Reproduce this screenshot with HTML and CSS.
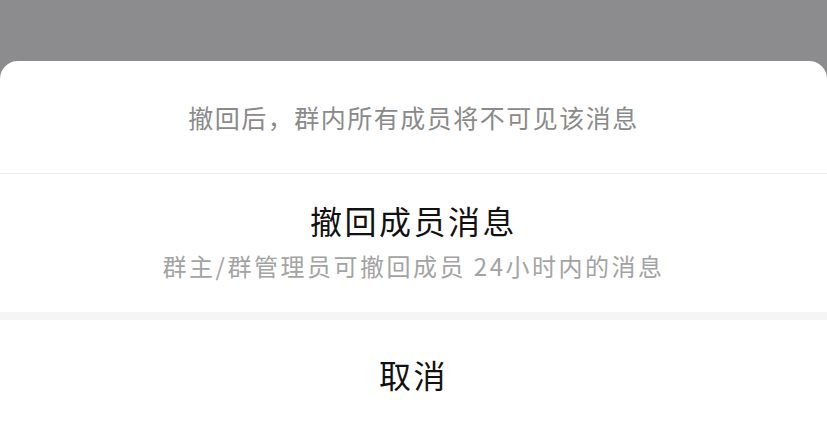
FILE: index.html
```html
<!DOCTYPE html>
<html lang="zh-CN">
<head>
  <meta charset="UTF-8">
  <meta name="viewport" content="width=device-width, initial-scale=1.0">
  <title>撤回消息</title>
  <link rel="stylesheet" href="styles.css">
</head>
<body>

  <div class="sheet">
    <div class="sheet-tip">撤回后，群内所有成员将不可见该消息</div>

    <div class="sheet-action">
      <div class="action-title">撤回成员消息</div>
      <div class="action-desc">群主/群管理员可撤回成员 24小时内的消息</div>
    </div>

    <div class="sheet-gap"></div>

    <div class="sheet-cancel">取消</div>
  </div>

</body>
</html>
```

FILE: styles.css
```css
html, body {
  margin: 0;
  height: 100%;
}
body {
  font-family: "Noto Sans CJK SC", "Noto Sans", sans-serif;
  background-color: #8c8c8e;
  overflow: hidden;
}
.sheet {
  margin-top: 61px;
  background-color: #fff;
  border-radius: 18px 18px 0 0;
  text-align: center;
}
.sheet-tip {
  height: 112px;
  display: flex;
  align-items: center;
  justify-content: center;
  font-size: 25px;
  letter-spacing: 1.5px;
  color: #8a8a8a;
  border-bottom: 1px solid #ececec;
}
.sheet-action {
  height: 138px;
  display: flex;
  flex-direction: column;
  align-items: center;
  justify-content: center;
}
.action-title {
  font-size: 32px;
  letter-spacing: 2.5px;
  color: #111;
  line-height: 46px;
}
.action-desc {
  font-size: 24px;
  letter-spacing: 2.5px;
  color: #a3a3a3;
  line-height: 46px;
}
.sheet-gap {
  height: 8px;
  background-color: #f5f5f5;
}
.sheet-cancel {
  height: 108px;
  display: flex;
  align-items: center;
  justify-content: center;
  font-size: 32px;
  letter-spacing: 2.5px;
  color: #111;
  padding-bottom: 14px;
}
```
